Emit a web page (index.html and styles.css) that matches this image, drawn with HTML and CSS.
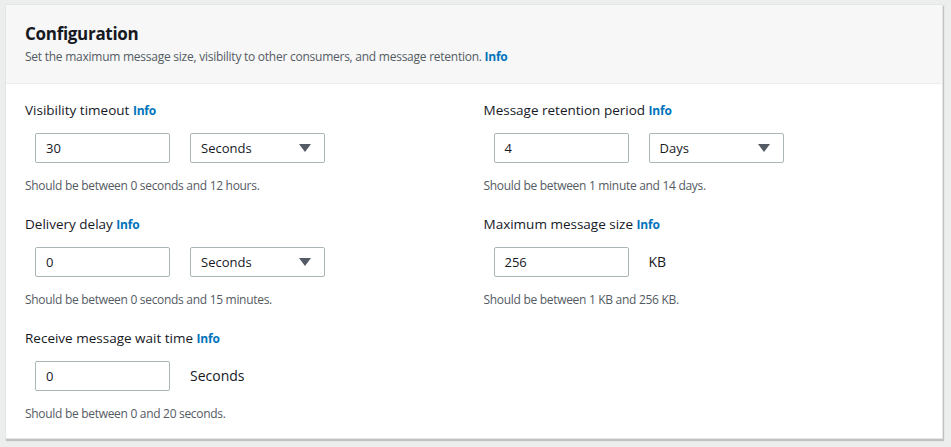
FILE: index.html
```html
<!DOCTYPE html>
<html>
<head>
<meta charset="utf-8">
<link rel="stylesheet" href="styles.css">
</head>
<body>
<div class="card">
  <div class="card-header">
    <h2 class="title">Configuration</h2>
    <p class="desc">Set the maximum message size, visibility to other consumers, and message retention. <a class="info">Info</a></p>
  </div>
  <div class="card-body">
    <div class="col">
      <div class="field">
        <div class="label">Visibility timeout <a class="info">Info</a></div>
        <div class="controls">
          <div class="input">30</div>
          <div class="select"><span>Seconds</span><span class="caret"></span></div>
        </div>
        <div class="help">Should be between 0 seconds and 12 hours.</div>
      </div>
      <div class="field">
        <div class="label">Delivery delay <a class="info">Info</a></div>
        <div class="controls">
          <div class="input">0</div>
          <div class="select"><span>Seconds</span><span class="caret"></span></div>
        </div>
        <div class="help">Should be between 0 seconds and 15 minutes.</div>
      </div>
      <div class="field">
        <div class="label">Receive message wait time <a class="info">Info</a></div>
        <div class="controls">
          <div class="input">0</div>
          <div class="unit">Seconds</div>
        </div>
        <div class="help">Should be between 0 and 20 seconds.</div>
      </div>
    </div>
    <div class="col">
      <div class="field">
        <div class="label">Message retention period <a class="info">Info</a></div>
        <div class="controls">
          <div class="input">4</div>
          <div class="select"><span>Days</span><span class="caret"></span></div>
        </div>
        <div class="help">Should be between 1 minute and 14 days.</div>
      </div>
      <div class="field">
        <div class="label">Maximum message size <a class="info">Info</a></div>
        <div class="controls">
          <div class="input">256</div>
          <div class="unit">KB</div>
        </div>
        <div class="help">Should be between 1 KB and 256 KB.</div>
      </div>
    </div>
  </div>
</div>
</body>
</html>
```

FILE: styles.css
```css
html, body {
  margin: 0;
  padding: 0;
}
body {
  background: #eceeed;
  font-family: "Open Sans", "Liberation Sans", sans-serif;
  color: #16191f;
  width: 951px;
  height: 447px;
  overflow: hidden;
}
.card {
  margin: 4px 0 0 5px;
  width: 938px;
  height: 435px;
  box-sizing: border-box;
  background: #fff;
  border: 1px solid #e4e6e5;
  box-shadow: 1px 2px 1px rgba(0,0,0,0.18);
  overflow: hidden;
}
.card-header {
  background: #f6f7f6;
  border-bottom: 1px solid #eaeded;
  height: 79px;
  box-sizing: border-box;
  padding: 18px 0 0 19px;
}
.title {
  margin: 0;
  font-size: 17px;
  font-weight: 700;
  line-height: 22px;
  letter-spacing: -0.3px;
}
.desc {
  margin: 4px 0 0;
  font-size: 12px;
  line-height: 16px;
  color: #545b64;
  letter-spacing: -0.25px;
}
.info {
  color: #0073bb;
  font-weight: 700;
}
.card-body {
  display: flex;
  padding: 17px 0 0 19px;
}
.col {
  width: 459px;
  display: flex;
  flex-direction: column;
  gap: 22px;
}
.label {
  font-size: 13.5px;
  line-height: 18px;
  letter-spacing: 0;
}
.label .info {
  font-size: 12px;
  letter-spacing: -0.2px;
}
.controls {
  display: flex;
  align-items: center;
  margin: 13px 0 0 10px;
  gap: 20px;
}
.input, .select {
  width: 135px;
  height: 30px;
  box-sizing: border-box;
  border: 1px solid #aab7b8;
  border-radius: 2px;
  font-size: 13px;
  line-height: 28px;
  padding: 0 10px;
  color: #16191f;
}
.select {
  display: flex;
  justify-content: space-between;
  align-items: center;
}
.caret {
  width: 0;
  height: 0;
  border-left: 6px solid transparent;
  border-right: 6px solid transparent;
  border-top: 8px solid #545b64;
  margin-right: 3px;
}
.unit {
  font-size: 14px;
  line-height: 30px;
}
.help {
  margin-top: 16px;
  font-size: 12px;
  line-height: 14px;
  color: #545b64;
  letter-spacing: -0.3px;
}
```
